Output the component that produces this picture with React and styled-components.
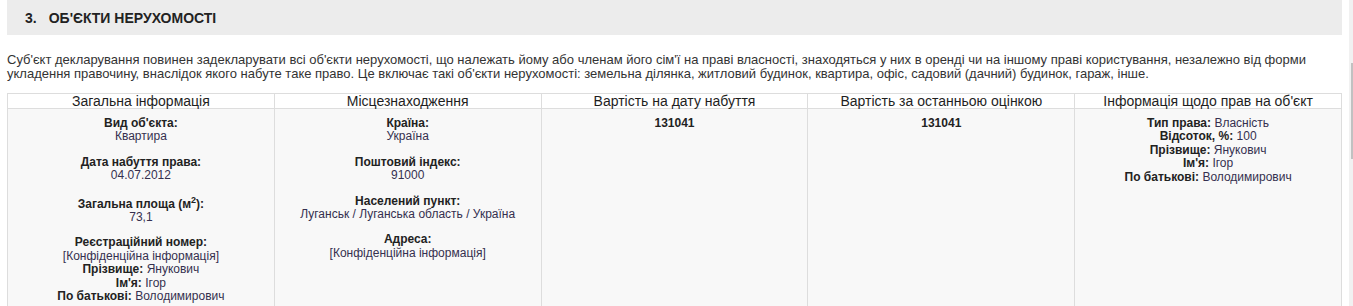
import React from "react";
import styled, { createGlobalStyle } from "styled-components";

const Global = createGlobalStyle`
  html, body { margin: 0; padding: 0; background: #fff; }
  body { font-family: "Liberation Sans", Arial, sans-serif; color: #222; overflow: hidden; }
`;

const Page = styled.div`
  width: 1353px;
  height: 306px;
  display: flex;
  justify-content: space-between;
  align-items: stretch;
  overflow: hidden;
`;

const Content = styled.div`
  width: 1335px;
  margin-left: 7px;
  flex-shrink: 0;
`;

const Scrollbar = styled.div`
  width: 4px;
  flex-shrink: 0;
  background: #f1f1f1;
  display: flex;
  justify-content: flex-end;
  align-items: flex-start;
  padding-top: 63px;
  box-sizing: border-box;
`;

const Thumb = styled.div`
  width: 2px;
  height: 96px;
  background: #c1c1c1;
`;

const SectionBar = styled.div`
  height: 35px;
  background: #ececec;
  display: flex;
  align-items: center;
  padding-left: 18px;
  font-size: 14px;
  font-weight: bold;
  text-transform: uppercase;
  color: #222;
  gap: 12px;
`;

const Intro = styled.p`
  margin: 18px 0 12px;
  font-size: 13px;
  line-height: 14px;
  color: #333;
`;

const Table = styled.table`
  width: 1335px;
  border-collapse: collapse;
  table-layout: fixed;
`;

const Th = styled.th`
  border: 1px solid #ddd;
  background: #fff;
  font-size: 14px;
  font-weight: normal;
  line-height: 14px;
  height: 14px;
  padding: 0;
  color: #1e1e1e;
  text-align: center;
`;

const Td = styled.td`
  border: 1px solid #ddd;
  border-bottom: none;
  background: #f8f8f8;
  vertical-align: top;
  text-align: center;
  font-size: 12px;
  line-height: 13.4px;
  padding: 8px 4px 0;
  height: 200px;
`;

const Group = styled.div`
  margin-bottom: ${(p) => (p.$last ? 0 : "12px")};
  padding-top: ${(p) => (p.$tall ? "3px" : 0)};
`;

const Label = styled.b`
  color: #222;
`;

const Sup = styled.sup`
  font-size: 9px;
  line-height: 0;
  vertical-align: super;
`;

const Value = styled.span`
  color: #35304f;
  display: ${(p) => (p.$block ? "block" : "inline")};
`;

const Line = styled.div``;

const Amount = styled.b`
  color: #222;
`;

const Field = ({ label, value, last, tall, children }) => (
  <Group $last={last} $tall={tall}>
    <Label>{label}</Label>
    <Value $block>{value}</Value>
    {children}
  </Group>
);

const Inline = ({ label, value }) => (
  <Line>
    <Label>{label}</Label> <Value>{value}</Value>
  </Line>
);

export default function App() {
  return (
    <>
      <Global />
      <Page>
        <Content>
          <SectionBar>
            <span>3.</span>
            <span>Об'єкти нерухомості</span>
          </SectionBar>
          <Intro>
            Суб'єкт декларування повинен задекларувати всі об'єкти нерухомості, що належать йому або членам його сім'ї на праві власності, знаходяться у них в оренді чи на іншому праві користування, незалежно від форми укладення правочину, внаслідок якого набуте таке право. Це включає такі об'єкти нерухомості: земельна ділянка, житловий будинок, квартира, офіс, садовий (дачний) будинок, гараж, інше.
          </Intro>
          <Table>
            <thead>
              <tr>
                <Th>Загальна інформація</Th>
                <Th>Місцезнаходження</Th>
                <Th>Вартість на дату набуття</Th>
                <Th>Вартість за останньою оцінкою</Th>
                <Th>Інформація щодо прав на об'єкт</Th>
              </tr>
            </thead>
            <tbody>
              <tr>
                <Td>
                  <Field label="Вид об'єкта:" value="Квартира" />
                  <Field label="Дата набуття права:" value="04.07.2012" />
                  <Field
                    tall
                    label={
                      <>
                        Загальна площа (м<Sup>2</Sup>):
                      </>
                    }
                    value="73,1"
                  />
                  <Field label="Реєстраційний номер:" value="[Конфіденційна інформація]" last>
                    <Inline label="Прізвище:" value="Янукович" />
                    <Inline label="Ім'я:" value="Ігор" />
                    <Inline label="По батькові:" value="Володимирович" />
                  </Field>
                </Td>
                <Td>
                  <Field label="Країна:" value="Україна" />
                  <Field label="Поштовий індекс:" value="91000" />
                  <Field label="Населений пункт:" value="Луганськ / Луганська область / Україна" />
                  <Field label="Адреса:" value="[Конфіденційна інформація]" last />
                </Td>
                <Td>
                  <Amount>131041</Amount>
                </Td>
                <Td>
                  <Amount>131041</Amount>
                </Td>
                <Td>
                  <Inline label="Тип права:" value="Власність" />
                  <Inline label="Відсоток, %:" value="100" />
                  <Inline label="Прізвище:" value="Янукович" />
                  <Inline label="Ім'я:" value="Ігор" />
                  <Inline label="По батькові:" value="Володимирович" />
                </Td>
              </tr>
            </tbody>
          </Table>
        </Content>
        <Scrollbar>
          <Thumb />
        </Scrollbar>
      </Page>
    </>
  );
}
